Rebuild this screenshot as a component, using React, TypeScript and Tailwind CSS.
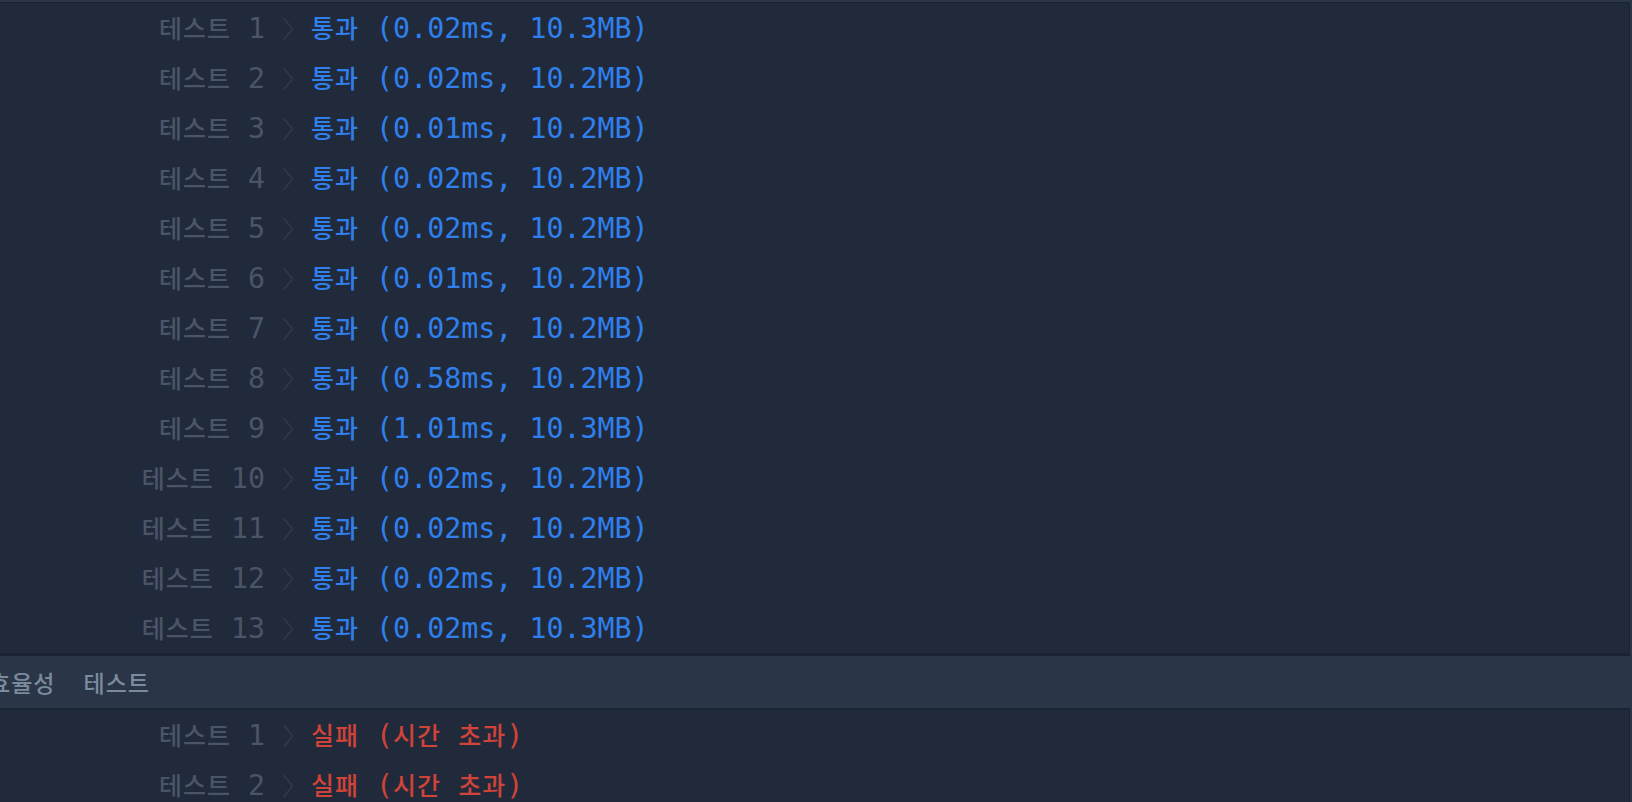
const passRows = [
  { n: 1, time: "0.02ms", mem: "10.3MB" },
  { n: 2, time: "0.02ms", mem: "10.2MB" },
  { n: 3, time: "0.01ms", mem: "10.2MB" },
  { n: 4, time: "0.02ms", mem: "10.2MB" },
  { n: 5, time: "0.02ms", mem: "10.2MB" },
  { n: 6, time: "0.01ms", mem: "10.2MB" },
  { n: 7, time: "0.02ms", mem: "10.2MB" },
  { n: 8, time: "0.58ms", mem: "10.2MB" },
  { n: 9, time: "1.01ms", mem: "10.3MB" },
  { n: 10, time: "0.02ms", mem: "10.2MB" },
  { n: 11, time: "0.02ms", mem: "10.2MB" },
  { n: 12, time: "0.02ms", mem: "10.2MB" },
  { n: 13, time: "0.02ms", mem: "10.3MB" },
];

const mono = "font-['DejaVu_Sans_Mono','Noto_Sans_CJK_KR',monospace]";

function Ko({ children }: { children: React.ReactNode }) {
  return (
    <span className="font-['Noto_Sans_CJK_KR',sans-serif] text-[25px] font-medium tracking-[1px]">
      {children}
    </span>
  );
}

// thin chevron between the label and the result
function Chevron() {
  return (
    <svg width="12" height="24" viewBox="0 0 12 24" className="shrink-0">
      <polyline
        points="1.5,1 10.5,12 1.5,23"
        fill="none"
        stroke="#303a4b"
        strokeWidth="1.6"
      />
    </svg>
  );
}

function Row({ n, children }: { n: number; children: React.ReactNode }) {
  return (
    <div className={`flex h-[50px] items-center whitespace-pre pt-[2px] text-[28.3px] leading-none ${mono}`}>
      <div className="flex w-[265px] justify-end text-[#4a5568]">
        <span>
          <Ko>테스트</Ko> {n}
        </span>
      </div>
      <div className="ml-[17px] mr-[17px] flex items-center">
        <Chevron />
      </div>
      {children}
    </div>
  );
}

export default function App() {
  return (
    <div className="h-[802px] w-full overflow-hidden bg-[#2a3547]">
      <div className="mr-[2px] mt-[2px] border-t border-r border-b-[3px] border-[#1b2231] bg-[#212a3b]">
        {passRows.map((r) => (
          <Row key={r.n} n={r.n}>
            <span className="text-[#2f80ed]">
              <Ko>통과</Ko> ({r.time}, {r.mem})
            </span>
          </Row>
        ))}
      </div>

      <div className="flex h-[52px] items-center overflow-hidden">
        <div className="-ml-[11px] flex items-center gap-[28px] whitespace-nowrap font-['Noto_Sans_CJK_KR',sans-serif] text-[23px] font-medium tracking-[1px] text-[#7b8b9e]">
          <span>효율성</span>
          <span>테스트</span>
        </div>
      </div>

      <div className="mr-[2px] border-t-2 border-r border-[#1b2231] bg-[#212a3b] pb-10">
        {[1, 2].map((n) => (
          <Row key={n} n={n}>
            <span className="text-[#cf4338]">
              <Ko>실패</Ko> (<Ko>시간</Ko> <Ko>초과</Ko>)
            </span>
          </Row>
        ))}
      </div>
    </div>
  );
}
